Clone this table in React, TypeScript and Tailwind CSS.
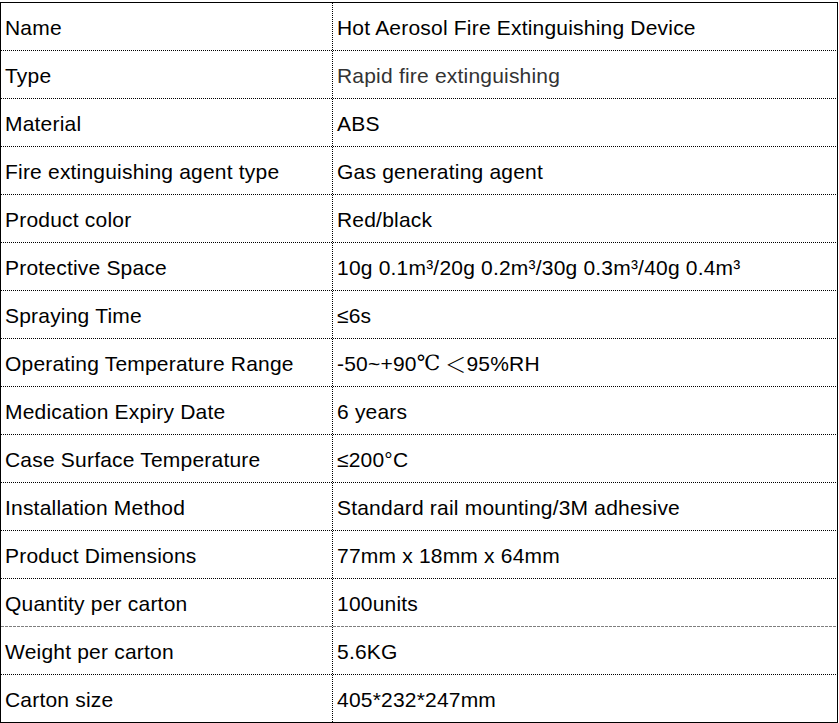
const rows: { label: string; value: React.ReactNode; muted?: boolean }[] = [
  { label: 'Name', value: 'Hot Aerosol Fire Extinguishing Device' },
  { label: 'Type', value: 'Rapid fire extinguishing', muted: true },
  { label: 'Material', value: 'ABS' },
  { label: 'Fire extinguishing agent type', value: 'Gas generating agent' },
  { label: 'Product color', value: 'Red/black' },
  { label: 'Protective Space', value: '10g 0.1m³/20g 0.2m³/30g 0.3m³/40g 0.4m³' },
  { label: 'Spraying Time', value: '≤6s' },
  {
    label: 'Operating Temperature Range',
    value: (
      <>
        -50~+90
        <span className="font-['Liberation_Serif','DejaVu_Serif',serif] font-light">℃</span>
        <span className="font-['Noto_Sans_CJK_SC',sans-serif] font-light"> ＜</span>
        95%RH
      </>
    ),
  },
  { label: 'Medication Expiry Date', value: '6 years' },
  { label: 'Case Surface Temperature', value: '≤200°C' },
  { label: 'Installation Method', value: 'Standard rail mounting/3M adhesive' },
  { label: 'Product Dimensions', value: '77mm x 18mm x 64mm' },
  { label: 'Quantity per carton', value: '100units' },
  { label: 'Weight per carton', value: '5.6KG' },
  { label: 'Carton size', value: '405*232*247mm' },
];

const DottedH = () => (
  <div className="h-px w-full bg-[repeating-linear-gradient(to_right,#000_0_1px,transparent_1px_2px)]" />
);

const DashedH = () => (
  <div className="h-px w-full bg-[repeating-linear-gradient(to_right,#7f7f7f_0_3px,transparent_3px_4px)]" />
);

export default function App() {
  return (
    <div className="min-h-[723px] w-[839px] bg-white pt-[2px] font-['Liberation_Sans',Arial,sans-serif] text-[21px] tracking-[0.2px] text-black">
      <div className="w-[838px] border border-black">
        {rows.map((row, i) => (
          <div key={row.label}>
            <div className="flex h-[47px]">
              <div className="flex w-[331px] items-center pl-[4px] pt-[2px]">{row.label}</div>
              <div className="w-px bg-[repeating-linear-gradient(to_bottom,#000_0_1px,transparent_1px_2px)]" />
              <div
                className={
                  'flex flex-1 items-center whitespace-pre pl-[4px] pt-[2px] ' +
                  (row.muted ? 'text-[#333333]' : '')
                }
              >
                {row.value}
              </div>
            </div>
            {i < rows.length - 1 ? i === 12 ? <DashedH /> : <DottedH /> : null}
          </div>
        ))}
      </div>
    </div>
  );
}
